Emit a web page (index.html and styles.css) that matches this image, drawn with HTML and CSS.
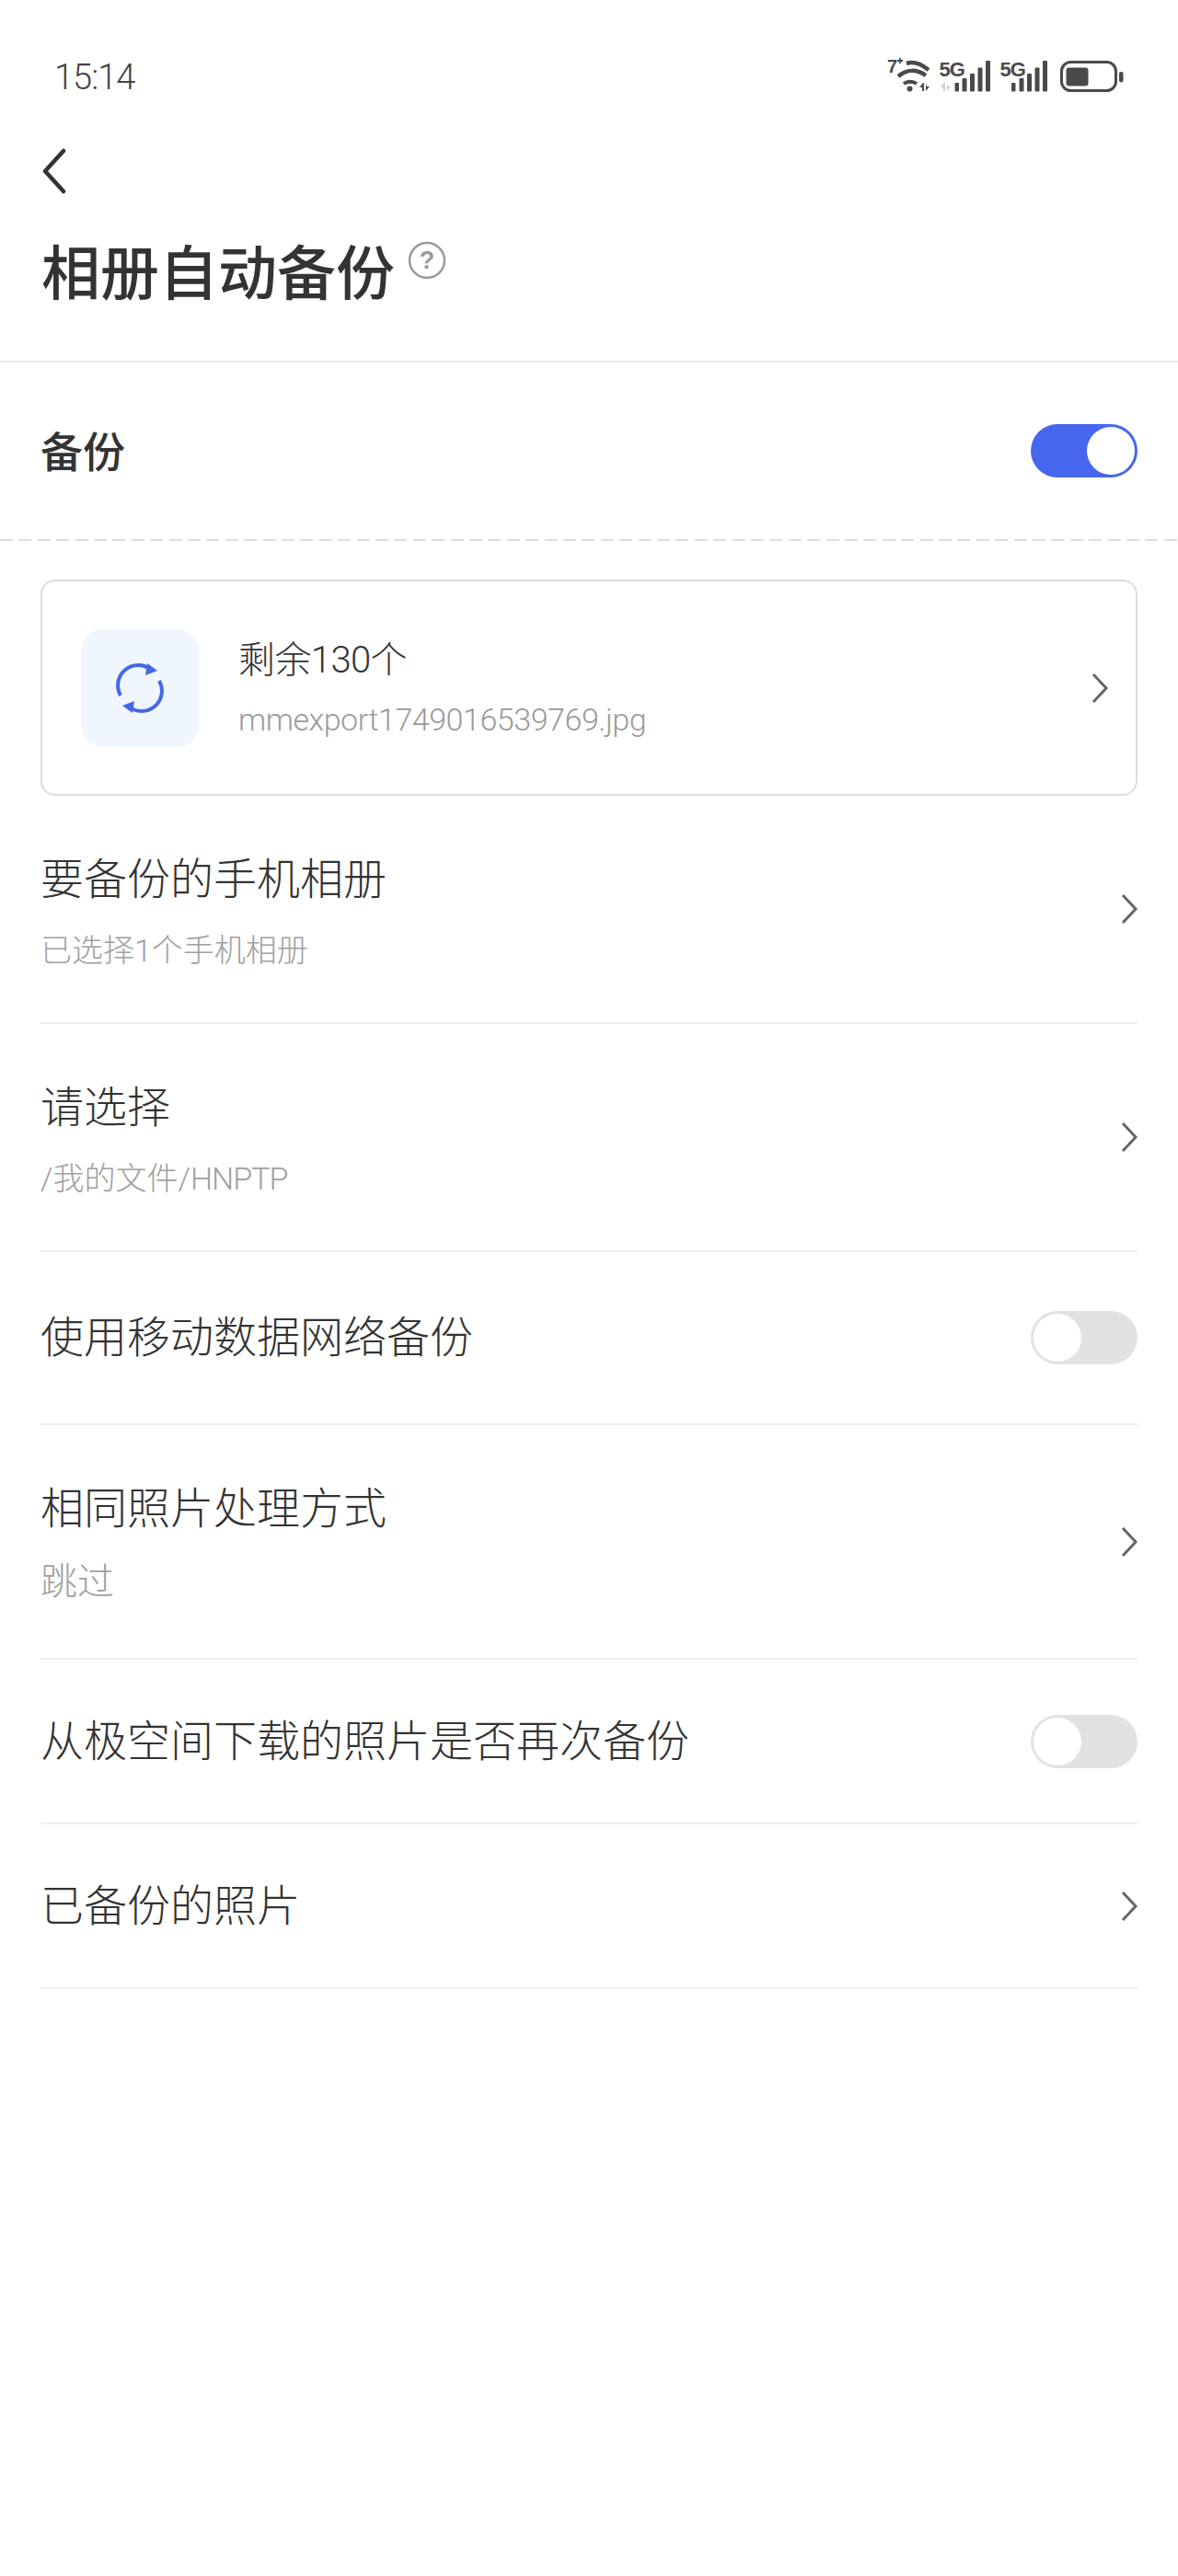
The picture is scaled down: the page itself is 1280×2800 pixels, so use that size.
FILE: index.html

```html
<!DOCTYPE html>
<html lang="zh-CN">

<head>
    <meta charset="UTF-8">
    <meta name="viewport" content="width=device-width, initial-scale=1.0">
    <title>相册自动备份</title>
    <link rel="stylesheet" href="styles.css">
</head>

<body>
    <div class="status-bar">
        <span class="status-time">15:14</span>
        <svg class="status-icons" width="290" height="60" viewBox="960 50 290 60">
            <text class="status-label" x="964" y="79" font-size="20">7</text>
            <path d="M975 66h6M978 63v6" stroke="#4a4a4a" stroke-width="1.8" fill="none"/>
            <g fill="none" stroke="#4a4a4a" stroke-linecap="butt">
                <path d="M985 69c6-2 14-1 24 7" stroke-width="4.5"/>
                <path d="M976 83c9-8 20-8 30-1" stroke-width="4.5"/>
                <path d="M982 91c4-3 10-3 14 0" stroke-width="4"/>
            </g>
            <circle cx="988.5" cy="96.5" r="3" fill="#4a4a4a"/>
            <path d="M1003 90l-4 5h3v4h2v-9zM1006 90v9l4-5h-3z" fill="#4a4a4a"/>
            <text class="status-label" x="1020.5" y="83" font-size="22">5G</text>
            <path d="M1026 90l-4 5h3v4h2v-9zM1029 90v9l4-5h-3z" fill="#cfcfcf"/>
            <g fill="#4a4a4a">
                <rect x="1037.5" y="90" width="4.5" height="9.5" rx="1"/>
                <rect x="1045.5" y="85" width="5" height="14.5" rx="1"/>
                <rect x="1054" y="80" width="5" height="19.5" rx="1"/>
                <rect x="1062.5" y="73.5" width="5" height="26" rx="1"/>
                <rect x="1071" y="66" width="5" height="33.5" rx="1"/>
            </g>
            <text class="status-label" x="1086.5" y="83" font-size="22">5G</text>
            <g fill="#4a4a4a">
                <rect x="1099" y="90" width="4.5" height="9.5" rx="1"/>
                <rect x="1107.5" y="85" width="5" height="14.5" rx="1"/>
                <rect x="1116" y="80" width="5" height="19.5" rx="1"/>
                <rect x="1124.5" y="73.5" width="5" height="26" rx="1"/>
                <rect x="1133" y="66" width="5" height="33.5" rx="1"/>
            </g>
            <rect x="1153.5" y="67.5" width="59" height="31" rx="10" fill="none" stroke="#4a4a4a" stroke-width="3"/>
            <rect x="1158.5" y="73.5" width="24" height="20" rx="3" fill="#4a4a4a"/>
            <rect x="1216" y="78" width="4.5" height="11.5" rx="2" fill="#4a4a4a"/>
        </svg>
    </div>

    <div class="header">
        <svg class="back-icon" width="30" height="50" viewBox="0 0 30 50">
            <path d="M25 3L5 25l20 22" fill="none" stroke="#333" stroke-width="4.5" stroke-linecap="round" stroke-linejoin="round"/>
        </svg>
        <div class="title-line">
            <h1>相册自动备份</h1>
            <svg class="help-icon" width="42" height="42" viewBox="0 0 42 42">
                <circle cx="21" cy="21" r="19" fill="none" stroke="#9a9a9a" stroke-width="2.5"/>
                <text x="21" y="30" text-anchor="middle" class="help-mark">?</text>
            </svg>
        </div>
    </div>

    <div class="backup-row">
        <span class="backup-label">备份</span>
        <span class="switch switch-on"><span class="knob"></span></span>
    </div>

    <div class="content">
        <div class="progress-card">
            <div class="sync-box">
                <svg width="56" height="60" viewBox="0 0 56 60">
                    <path d="M7 38A22 22 0 0 1 40 10" fill="none" stroke="#4668e6" stroke-width="4"/>
                    <path d="M36 3l11 8-13 5z" fill="#4668e6"/>
                    <path d="M49 22A22 22 0 0 1 16 50" fill="none" stroke="#4668e6" stroke-width="4"/>
                    <path d="M20 57L9 49l13-5z" fill="#4668e6"/>
                </svg>
            </div>
            <div class="card-text">
                <div class="card-title">剩余130个</div>
                <div class="card-file">mmexport1749016539769.jpg</div>
            </div>
            <svg class="chevron" width="20" height="34" viewBox="0 0 20 34">
                <path d="M3 2l14 15L3 32" fill="none" stroke="#666" stroke-width="3"/>
            </svg>
        </div>

        <div class="row row-double">
            <div class="row-text">
                <div class="row-title">要备份的手机相册</div>
                <div class="row-sub">已选择1个手机相册</div>
            </div>
            <svg class="chevron" width="20" height="34" viewBox="0 0 20 34">
                <path d="M3 2l14 15L3 32" fill="none" stroke="#666" stroke-width="3"/>
            </svg>
        </div>

        <div class="row row-double">
            <div class="row-text">
                <div class="row-title">请选择</div>
                <div class="row-sub">/我的文件/<span class="tight">HNPTP</span></div>
            </div>
            <svg class="chevron" width="20" height="34" viewBox="0 0 20 34">
                <path d="M3 2l14 15L3 32" fill="none" stroke="#666" stroke-width="3"/>
            </svg>
        </div>

        <div class="row row-single">
            <div class="row-title">使用移动数据网络备份</div>
            <span class="switch"><span class="knob"></span></span>
        </div>

        <div class="row row-double row-large">
            <div class="row-text">
                <div class="row-title">相同照片处理方式</div>
                <div class="row-sub">跳过</div>
            </div>
            <svg class="chevron" width="20" height="34" viewBox="0 0 20 34">
                <path d="M3 2l14 15L3 32" fill="none" stroke="#666" stroke-width="3"/>
            </svg>
        </div>

        <div class="row row-single row-low">
            <div class="row-title">从极空间下载的照片是否再次备份</div>
            <span class="switch"><span class="knob"></span></span>
        </div>

        <div class="row row-single row-low">
            <div class="row-title">已备份的照片</div>
            <svg class="chevron" width="20" height="34" viewBox="0 0 20 34">
                <path d="M3 2l14 15L3 32" fill="none" stroke="#666" stroke-width="3"/>
            </svg>
        </div>
    </div>
</body>

</html>
```

FILE: styles.css

```css
* {
    box-sizing: border-box;
}
body {
    margin: 0;
    background-color: #fff;
    color: #333;
    font-family: Roboto, "Noto Sans CJK SC", sans-serif;
    font-weight: 300;
}
.status-bar {
    height: 126px;
    padding: 59px 0 0 59px;
    display: flex;
    justify-content: space-between;
    align-items: flex-start;
}
.status-time {
    font-size: 38px;
    line-height: 50px;
    color: #444;
    letter-spacing: -1px;
}
.status-icons {
    margin-top: -9px;
    margin-right: 30px;
}
.status-label {
    font-family: "Liberation Sans", sans-serif;
    font-weight: 700;
    fill: #4a4a4a;
    letter-spacing: -1px;
}
.header {
    height: 268px;
    padding: 35px 0 0 44px;
    border-bottom: 2px solid #e8e8e8;
}
.back-icon {
    display: block;
}
.title-line {
    display: flex;
    align-items: flex-start;
    margin-top: 36px;
}
h1 {
    margin: 0 0 0 1px;
    font-family: "Noto Sans CJK SC", sans-serif;
    font-size: 64px;
    font-weight: 500;
    line-height: 90px;
    color: #333;
}
.help-icon {
    margin: 15px 0 0 14px;
}
.help-mark {
    font-family: "Liberation Sans", sans-serif;
    font-size: 27px;
    font-weight: 700;
    fill: #9a9a9a;
}
.backup-row {
    height: 194px;
    padding: 0 44px 3px 44px;
    display: flex;
    justify-content: space-between;
    align-items: center;
    background-image: repeating-linear-gradient(to right, #dedede 0, #dedede 14px, transparent 14px, transparent 20.4px);
    background-size: 100% 2px;
    background-position: left bottom;
    background-repeat: no-repeat;
}
.backup-label {
    margin-bottom: 3px;
    font-family: "Noto Sans CJK SC", sans-serif;
    font-size: 46px;
    font-weight: 500;
    color: #333;
}
.switch {
    width: 116px;
    height: 58px;
    border-radius: 29px;
    padding: 3px;
    background-color: #e1e2e4;
    display: flex;
    justify-content: flex-start;
    flex-shrink: 0;
}
.switch-on {
    background-color: #4766ee;
    justify-content: flex-end;
}
.knob {
    width: 52px;
    height: 52px;
    border-radius: 50%;
    background-color: #fff;
}
.content {
    padding: 42px 44px 0 44px;
}
.progress-card {
    height: 235px;
    padding: 0 30px 0 42px;
    border: 2px solid #dcdcdc;
    border-radius: 16px;
    display: flex;
    align-items: center;
}
.sync-box {
    width: 128px;
    height: 128px;
    border-radius: 24px;
    background-color: #f0f6fe;
    display: flex;
    justify-content: center;
    align-items: center;
}
.card-text {
    flex: 1;
    margin-left: 43px;
}
.card-title {
    font-size: 40px;
    line-height: 56px;
    color: #333;
    letter-spacing: -0.6px;
}
.card-file {
    margin-top: 12px;
    font-size: 34px;
    line-height: 48px;
    color: #9a9a9a;
    letter-spacing: -0.45px;
}
.row {
    display: flex;
    justify-content: space-between;
    align-items: center;
    border-bottom: 2px solid #eeeeee;
    font-size: 46px;
}
.row-double {
    height: 248px;
}
.row-large {
    height: 255px;
}
.row-single {
    height: 188px;
}
.row-low {
    height: 179px;
}
.row-text {
    align-self: flex-start;
    padding-top: 59px;
}
.row-title {
    font-size: 47px;
    line-height: 64px;
    color: #333;
}
.row-sub {
    margin-top: 20px;
    font-size: 34px;
    line-height: 50px;
    color: #a0a0a0;
}
.row-large .row-sub {
    margin-top: 23px;
    font-size: 40px;
}
.tight {
    letter-spacing: -1px;
}
.chevron {
    flex-shrink: 0;
    margin-right: -1px;
}
```
